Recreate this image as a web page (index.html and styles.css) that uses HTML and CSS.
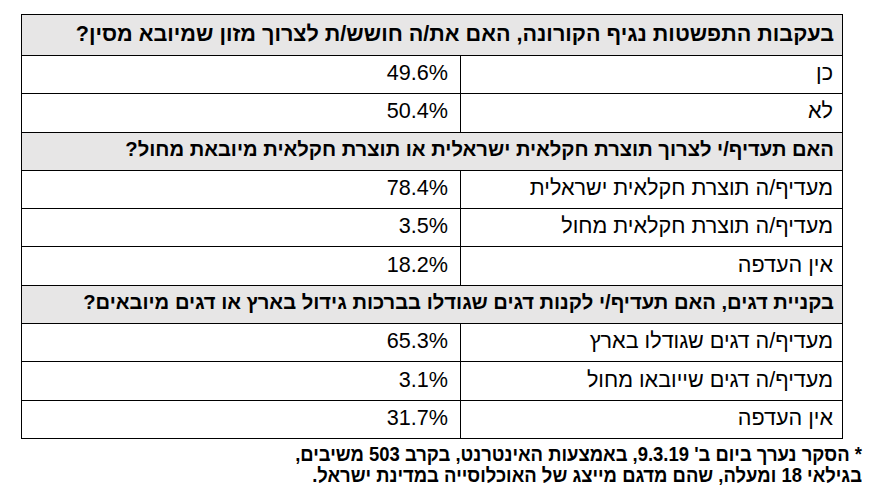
FILE: index.html
```html
<!DOCTYPE html>
<html lang="he" dir="rtl">
<head>
<meta charset="utf-8">
<link rel="stylesheet" href="styles.css">
</head>
<body>
<div class="page">
  <table class="survey">
    <colgroup>
      <col class="col-label">
      <col class="col-val">
    </colgroup>
    <tbody>
      <tr class="q first"><th colspan="2">בעקבות התפשטות נגיף הקורונה, האם את/ה חושש/ת לצרוך מזון שמיובא מסין?</th></tr>
      <tr><td class="label">כן</td><td class="val">49.6%</td></tr>
      <tr><td class="label">לא</td><td class="val">50.4%</td></tr>
      <tr class="q"><th colspan="2">האם תעדיף/י לצרוך תוצרת חקלאית ישראלית או תוצרת חקלאית מיובאת מחול?</th></tr>
      <tr><td class="label">מעדיף/ה תוצרת חקלאית ישראלית</td><td class="val">78.4%</td></tr>
      <tr><td class="label">מעדיף/ה תוצרת חקלאית מחול</td><td class="val">3.5%</td></tr>
      <tr><td class="label">אין העדפה</td><td class="val">18.2%</td></tr>
      <tr class="q"><th colspan="2">בקניית דגים, האם תעדיף/י לקנות דגים שגודלו בברכות גידול בארץ או דגים מיובאים?</th></tr>
      <tr><td class="label">מעדיף/ה דגים שגודלו בארץ</td><td class="val">65.3%</td></tr>
      <tr><td class="label">מעדיף/ה דגים שייובאו מחול</td><td class="val">3.1%</td></tr>
      <tr><td class="label">אין העדפה</td><td class="val">31.7%</td></tr>
    </tbody>
  </table>
  <div class="note">
    <p>* הסקר נערך ביום ב' 9.3.19, באמצעות האינטרנט, בקרב 503 משיבים,</p>
    <p>בגילאי 18 ומעלה, שהם מדגם מייצג של האוכלוסייה במדינת ישראל.</p>
  </div>
</div>
</body>
</html>
```
FILE: styles.css
```css
html, body {
  margin: 0;
  padding: 0;
  background: #ffffff;
}
.page {
  width: 875px;
  height: 496px;
  padding-top: 14px;
  box-sizing: border-box;
  font-family: "Liberation Sans", Arial, sans-serif;
  color: #000;
  overflow: hidden;
}
.survey {
  border-collapse: collapse;
  width: 821px;
  margin-right: 32px;
  table-layout: fixed;
}
.col-label {
  width: 382px;
}
.col-val {
  width: 439px;
}
.survey th,
.survey td {
  border: 1px solid #000;
  padding: 0 9px 3px 9px;
  height: 38.3px;
  box-sizing: border-box;
  text-align: right;
  vertical-align: middle;
  white-space: nowrap;
}
.survey th {
  background: #e7e6e6;
  font-weight: bold;
  font-size: 20.2px;
  padding-right: 8px;
}
.survey tr.first th {
  height: 41px;
  font-size: 21.6px;
}
.survey td {
  font-size: 21.6px;
  font-weight: normal;
}
.survey td.val {
  padding-right: 12px;
}
.note {
  padding-right: 13px;
  padding-top: 4px;
  font-weight: bold;
  font-size: 20.5px;
  line-height: 21px;
}
.note p {
  margin: 0;
  transform: scaleX(0.9);
  transform-origin: right center;
  white-space: nowrap;
}
```
